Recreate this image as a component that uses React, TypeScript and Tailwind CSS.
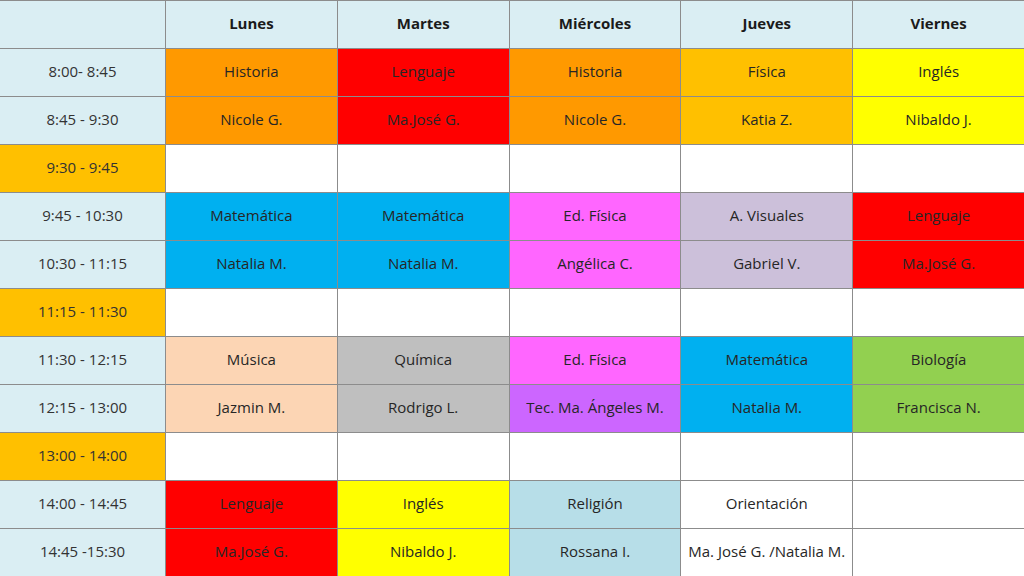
import React from "react";

type Cell = { t: string; c: string };

const BLUE_L = "bg-[#daeef3]";
const BREAK = "bg-[#ffc000]";
const W = "bg-white";

const days = ["Lunes", "Martes", "Miércoles", "Jueves", "Viernes"];

const rows: { time: string; tc: string; cells: Cell[] }[] = [
  {
    time: "8:00- 8:45",
    tc: BLUE_L,
    cells: [
      { t: "Historia", c: "bg-[#ff9900]" },
      { t: "Lenguaje", c: "bg-[#ff0000]" },
      { t: "Historia", c: "bg-[#ff9900]" },
      { t: "Física", c: "bg-[#ffc000]" },
      { t: "Inglés", c: "bg-[#ffff00]" },
    ],
  },
  {
    time: "8:45 - 9:30",
    tc: BLUE_L,
    cells: [
      { t: "Nicole G.", c: "bg-[#ff9900]" },
      { t: "Ma.José G.", c: "bg-[#ff0000]" },
      { t: "Nicole G.", c: "bg-[#ff9900]" },
      { t: "Katia Z.", c: "bg-[#ffc000]" },
      { t: "Nibaldo J.", c: "bg-[#ffff00]" },
    ],
  },
  {
    time: "9:30 - 9:45",
    tc: BREAK,
    cells: [
      { t: "", c: W },
      { t: "", c: W },
      { t: "", c: W },
      { t: "", c: W },
      { t: "", c: W },
    ],
  },
  {
    time: "9:45 - 10:30",
    tc: BLUE_L,
    cells: [
      { t: "Matemática", c: "bg-[#00b0f0]" },
      { t: "Matemática", c: "bg-[#00b0f0]" },
      { t: "Ed. Física", c: "bg-[#ff66ff]" },
      { t: "A. Visuales", c: "bg-[#ccc0da]" },
      { t: "Lenguaje", c: "bg-[#ff0000]" },
    ],
  },
  {
    time: "10:30 - 11:15",
    tc: BLUE_L,
    cells: [
      { t: "Natalia M.", c: "bg-[#00b0f0]" },
      { t: "Natalia M.", c: "bg-[#00b0f0]" },
      { t: "Angélica C.", c: "bg-[#ff66ff]" },
      { t: "Gabriel V.", c: "bg-[#ccc0da]" },
      { t: "Ma.José G.", c: "bg-[#ff0000]" },
    ],
  },
  {
    time: "11:15 - 11:30",
    tc: BREAK,
    cells: [
      { t: "", c: W },
      { t: "", c: W },
      { t: "", c: W },
      { t: "", c: W },
      { t: "", c: W },
    ],
  },
  {
    time: "11:30 - 12:15",
    tc: BLUE_L,
    cells: [
      { t: "Música", c: "bg-[#fcd5b4]" },
      { t: "Química", c: "bg-[#bfbfbf]" },
      { t: "Ed. Física", c: "bg-[#ff66ff]" },
      { t: "Matemática", c: "bg-[#00b0f0]" },
      { t: "Biología", c: "bg-[#92d050]" },
    ],
  },
  {
    time: "12:15 - 13:00",
    tc: BLUE_L,
    cells: [
      { t: "Jazmin M.", c: "bg-[#fcd5b4]" },
      { t: "Rodrigo L.", c: "bg-[#bfbfbf]" },
      { t: "Tec. Ma. Ángeles M.", c: "bg-[#cc66ff]" },
      { t: "Natalia M.", c: "bg-[#00b0f0]" },
      { t: "Francisca N.", c: "bg-[#92d050]" },
    ],
  },
  {
    time: "13:00 - 14:00",
    tc: BREAK,
    cells: [
      { t: "", c: W },
      { t: "", c: W },
      { t: "", c: W },
      { t: "", c: W },
      { t: "", c: W },
    ],
  },
  {
    time: "14:00 - 14:45",
    tc: BLUE_L,
    cells: [
      { t: "Lenguaje", c: "bg-[#ff0000]" },
      { t: "Inglés", c: "bg-[#ffff00]" },
      { t: "Religión", c: "bg-[#b7dee8]" },
      { t: "Orientación", c: W },
      { t: "", c: W },
    ],
  },
  {
    time: "14:45 -15:30",
    tc: BLUE_L,
    cells: [
      { t: "Ma.José G.", c: "bg-[#ff0000]" },
      { t: "Nibaldo J.", c: "bg-[#ffff00]" },
      { t: "Rossana I.", c: "bg-[#b7dee8]" },
      { t: "Ma. José G. /Natalia M.", c: W },
      { t: "", c: W },
    ],
  },
];

export default function App() {
  return (
    <div
      className="w-[1024px] h-[576px] bg-[#8c8c8c] pt-px grid grid-cols-[165px_repeat(5,1fr)] grid-rows-[repeat(12,47px)] gap-px text-[15px] text-[#262626] overflow-hidden"
      style={{ fontFamily: '"Open Sans", "Noto Sans", sans-serif' }}
    >
      <div className={`${BLUE_L}`} />
      {days.map((d) => (
        <div key={d} className={`${BLUE_L} flex items-center justify-center pb-[2px] font-bold text-[#1a1a1a]`}>
          {d}
        </div>
      ))}
      {rows.map((r, i) => (
        <React.Fragment key={i}>
          <div className={`${r.tc} flex items-center justify-center pb-[2px] text-[#333333]`}>{r.time}</div>
          {r.cells.map((c, j) => (
            <div key={j} className={`${c.c} flex items-center justify-center pb-[2px] whitespace-nowrap`}>
              {c.t}
            </div>
          ))}
        </React.Fragment>
      ))}
    </div>
  );
}
